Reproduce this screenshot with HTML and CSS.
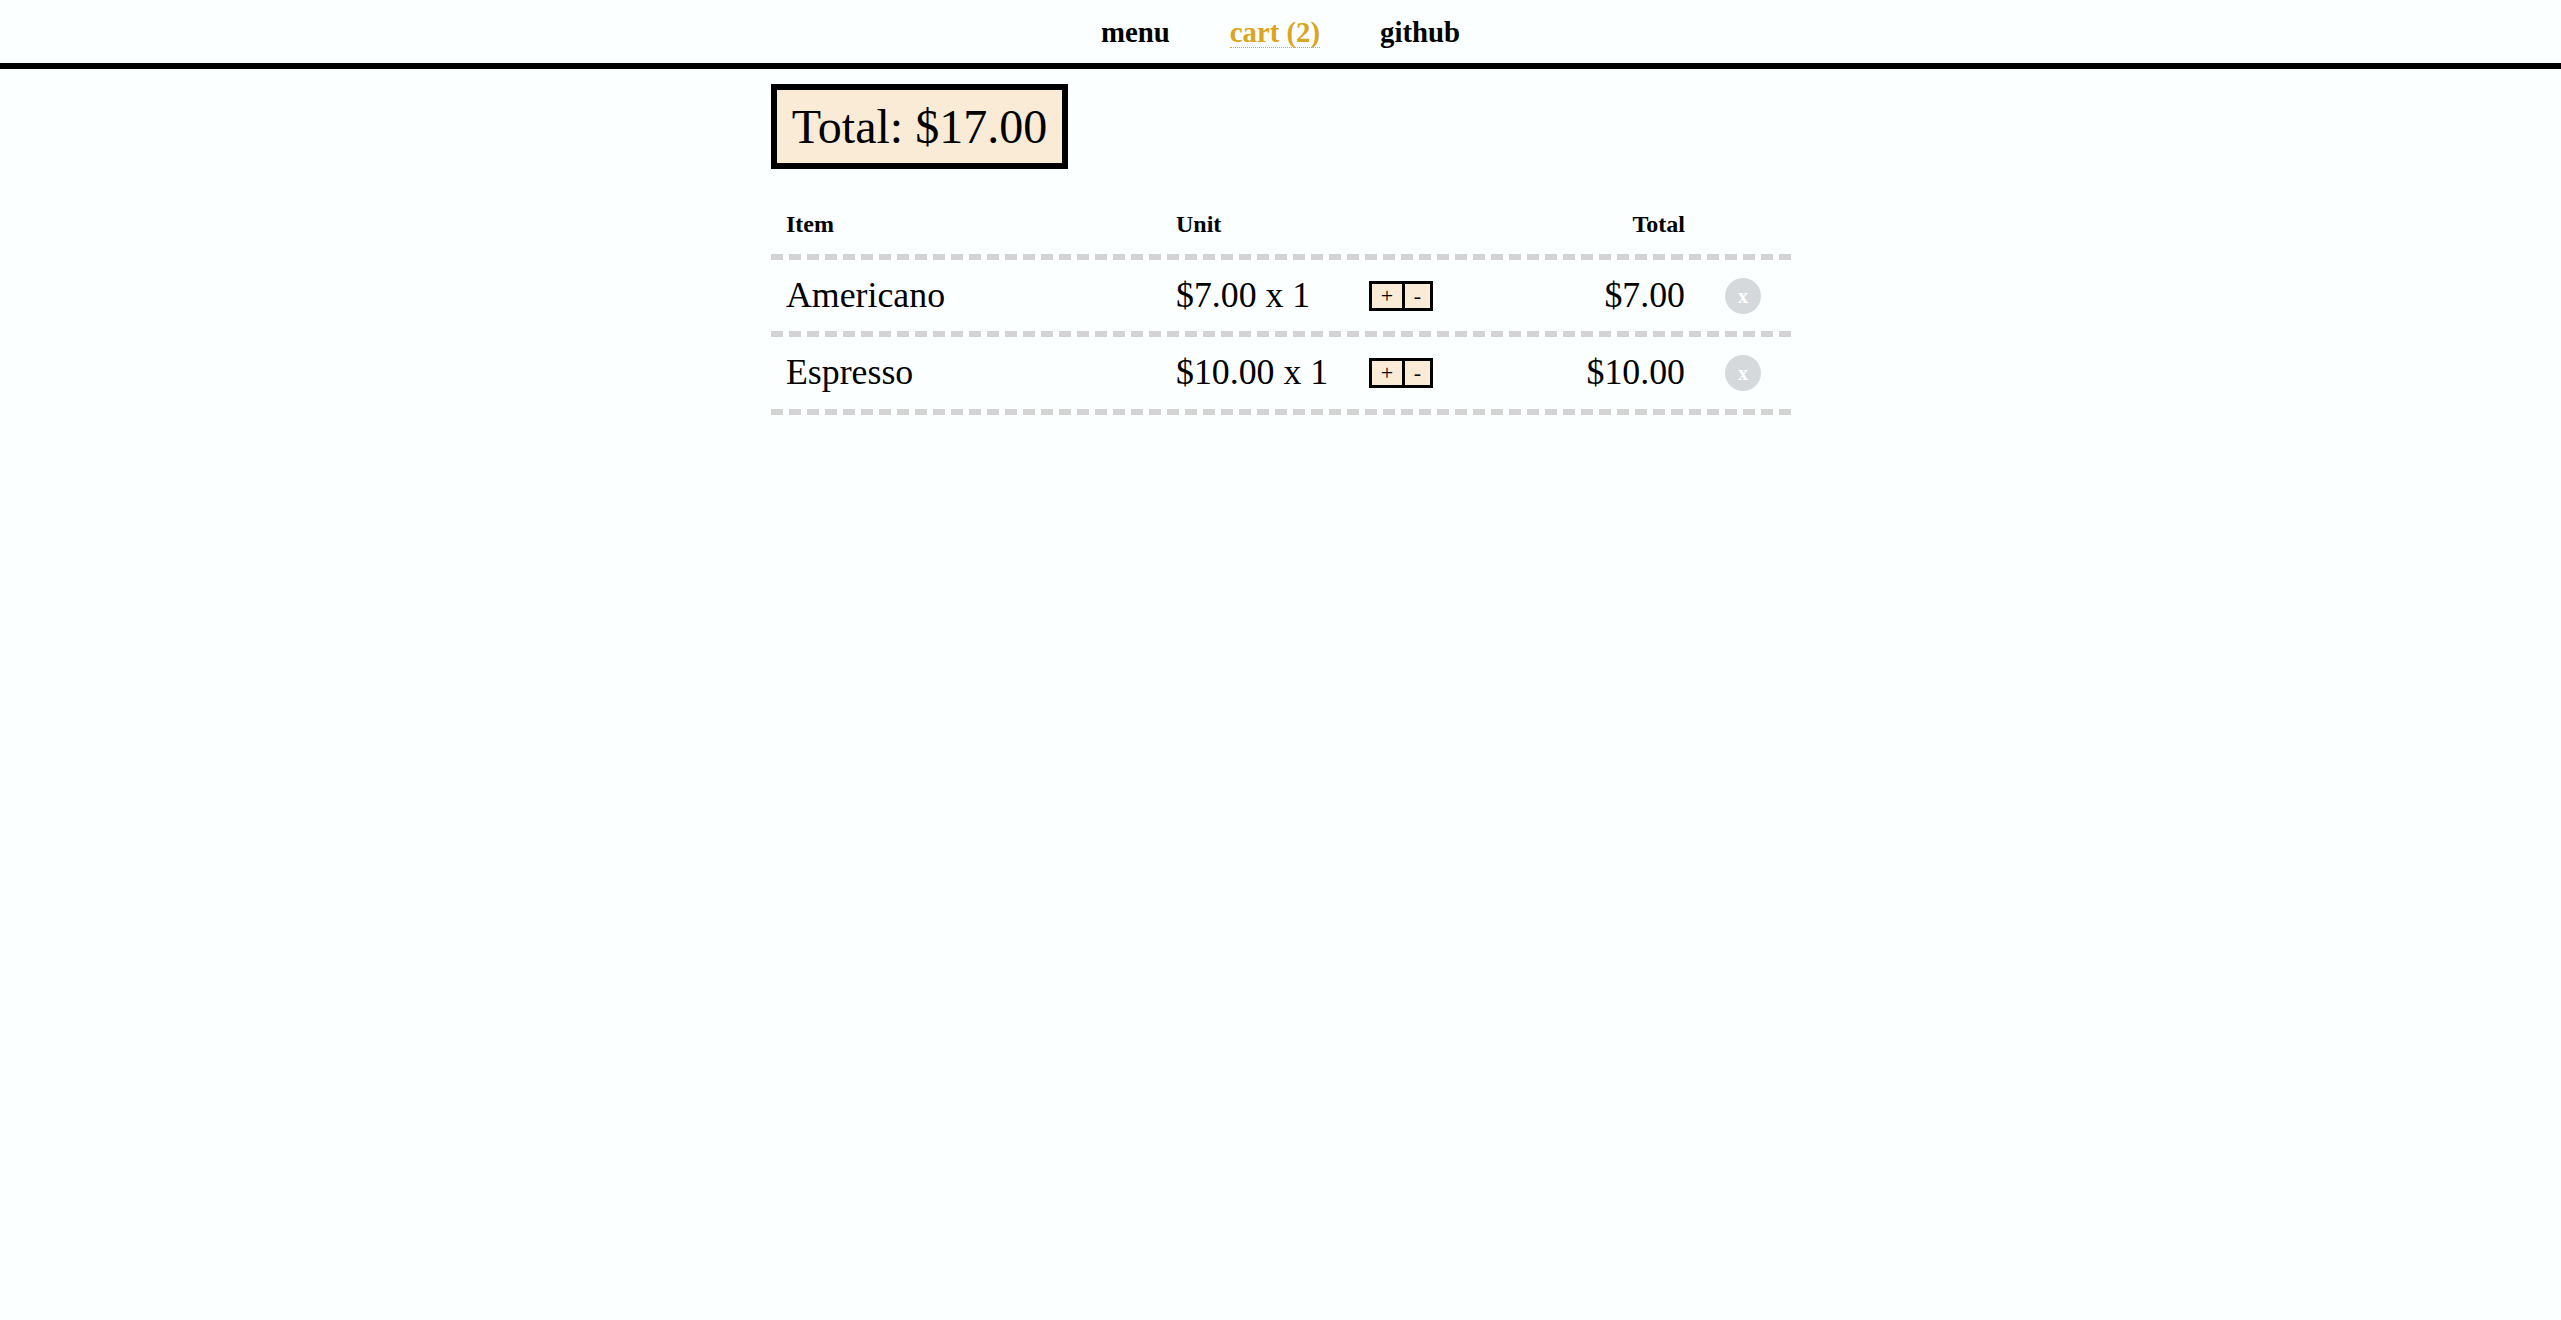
FILE: index.html
```html
<!DOCTYPE html>
<html lang="en">
<head>
<meta charset="utf-8">
<title>Coffee cart</title>
<link rel="stylesheet" href="styles.css">
</head>
<body>
<nav class="nav">
  <a class="nav-link">menu</a>
  <a class="nav-link active">cart (2)</a>
  <a class="nav-link">github</a>
</nav>
<main class="cart">
  <button class="pay">Total: $17.00</button>
  <ul class="list">
    <li class="row header"><div class="cell">Item</div><div class="cell">Unit</div><div></div><div class="cell total">Total</div><div></div></li>
    <li class="row">
      <div class="cell">Americano</div><div class="cell">$7.00 x 1</div>
      <div class="controls"><button class="step add">+</button><button class="step remove">-</button></div>
      <div class="cell total">$7.00</div>
      <button class="delete">x</button>
    </li>
    <li class="row">
      <div class="cell">Espresso</div><div class="cell">$10.00 x 1</div>
      <div class="controls"><button class="step add">+</button><button class="step remove">-</button></div>
      <div class="cell total">$10.00</div>
      <button class="delete">x</button>
    </li>
  </ul>
</main>
</body>
</html>
```
FILE: styles.css
```css
* { box-sizing: border-box; }
body {
  margin: 0;
  background: #fbffff;
  color: #000;
  font-family: "Liberation Serif", "Times New Roman", serif;
}
button { font-family: inherit; color: #000; margin: 0; }
.nav {
  display: flex;
  justify-content: center;
  gap: 60px;
  height: 69px;
  padding-top: 15px;
  border-bottom: 6px solid #000;
  font-size: 28.8px;
  font-weight: bold;
  line-height: 34px;
}
.nav-link { height: 33px; }
.nav-link.active { color: goldenrod; border-bottom: 1px dotted goldenrod; }
.cart { width: 1020px; margin: 15px 0 0 771px; }
.pay {
  display: block;
  width: 297px;
  height: 85px;
  padding: 0;
  border: 6px solid #000;
  background: #faebd7;
  font-size: 48px;
  line-height: 55px;
}
.list { margin: 27px 0 0; padding: 0; list-style: none; }
.row {
  display: grid;
  grid-template-columns: 390px 193px 160px 156px 76px;
  align-items: center;
  height: 78px;
  padding: 0 15px;
  border-bottom: 6px solid transparent;
  border-image: repeating-linear-gradient(90deg, #d3d3d3 0 12px, transparent 12px 18px) 0 0 6 0;
  font-size: 35.8px;
  line-height: 42px;
}
.row:nth-child(2) { height: 77px; padding-top: 1px; }
.row.header { height: 64px; font-size: 24px; font-weight: bold; line-height: 28px; }
.cell { padding-bottom: 2px; }
.total { text-align: right; }
.controls { display: flex; }
.step {
  height: 30px;
  padding: 0;
  border: 3px solid #000;
  background: #faebd7;
  font-size: 22px;
  line-height: 24px;
}
.add { width: 36px; }
.remove { width: 31px; margin-left: -3px; }
.delete {
  width: 36px;
  height: 36px;
  margin-left: 40px;
  padding: 0;
  border: 0;
  border-radius: 50%;
  background: #d6d9db;
  color: #fff;
  font-size: 20px;
  font-weight: bold;
  line-height: 22px;
}
```
